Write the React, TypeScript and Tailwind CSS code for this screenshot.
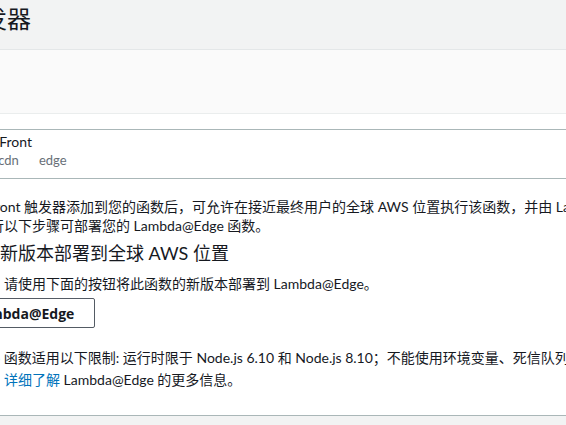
import { Cloud } from "lucide-react";

function TriggerCard() {
  return (
    <div className="h-[50px] border-y border-[#aab7b8] flex items-start gap-[17px]">
      <div className="mt-[4px] w-[40px] h-[40px] flex items-center justify-center bg-[#8c4fff] rounded-[2px] text-white">
        <Cloud className="w-6 h-6" />
      </div>
      <div className="flex flex-col pt-[3px]">
        <div className="text-[14px] leading-[18px]">CloudFront</div>
        <div className="flex gap-[20px] text-[13px] leading-[17px] text-[#687078] mt-[1px] ml-[-7px]">
          <span>aws</span>
          <span>cdn</span>
          <span>edge</span>
        </div>
      </div>
    </div>
  );
}

export default function App() {
  return (
    <div className="w-[566px] h-[425px] overflow-hidden bg-white text-[#16191f] font-['Lato','Noto_Sans_CJK_SC',sans-serif] whitespace-nowrap">
      <div className="ml-[-94px] w-[760px] h-full flex flex-col">
        <header className="h-[50px] shrink-0 bg-[#f2f3f3] border-b border-[#e4e7e8] pl-[5px]">
          <h1 className="text-[24px] leading-[32px] pt-[3px]">添加触发器</h1>
        </header>
        <div className="h-[64px] shrink-0 bg-[#fafafa] border-b border-[#eaeded]" />
        <div className="h-[15px] shrink-0" />
        <TriggerCard />

        <section className="h-[237px] shrink-0 border-b border-[#aab7b8] text-[14px] leading-[19px]">
          <p className="pt-[18px]">
            在您将 CloudFront 触发器添加到您的函数后，可允许在接近最终用户的全球 AWS 位置执行该函数，并由 Lambda@Edge 自动复制。
            <br />
            完成后，请执行以下步骤可部署您的 Lambda@Edge 函数。
          </p>
          <h3 className="mt-[6px] pl-[4px] text-[18px] leading-[24px]">第一步：将新版本部署到全球 AWS 位置</h3>
          <p className="mt-[9px]">要部署此函数，请使用下面的按钮将此函数的新版本部署到 Lambda@Edge。</p>
          <button className="mt-[5px] h-[30px] px-[20px] border border-[#545b64] rounded-[2px] font-bold text-[14px] bg-white font-['Open_Sans','Noto_Sans_CJK_SC',sans-serif]">
            部署到 Lambda@Edge
          </button>
          <p className="mt-[20px] pl-[4px]">
            Lambda@Edge 函数适用以下限制: 运行时限于 Node.js 6.10 和 Node.js 8.10；不能使用环境变量、死信队列和 AWS X-Ray。
          </p>
          <p className="mt-[3px]">
            有关限制说明，<a className="text-[#0073bb]">详细了解</a> Lambda@Edge 的更多信息。
          </p>
        </section>
        <div className="flex-1 bg-[#f2f3f3]" />
      </div>
    </div>
  );
}
